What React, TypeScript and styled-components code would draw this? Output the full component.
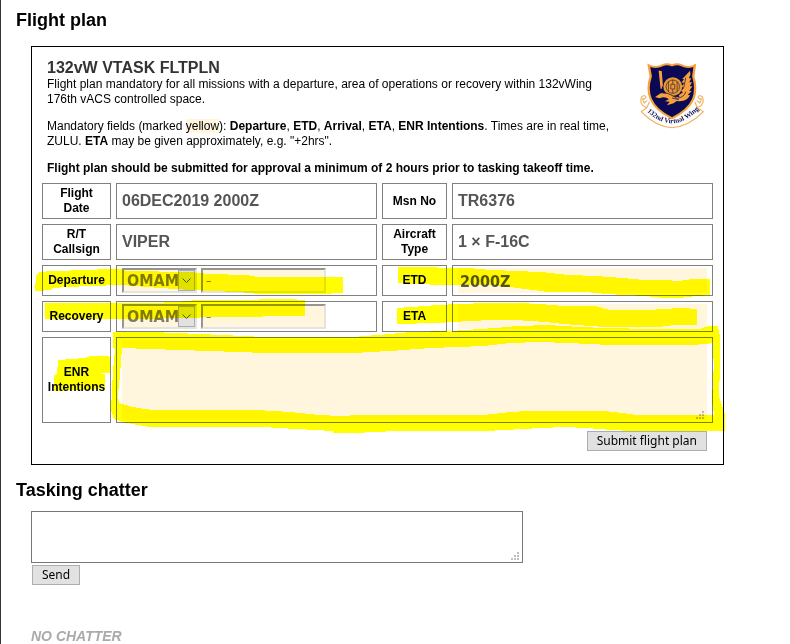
import React from "react";
import styled, { createGlobalStyle, css } from "styled-components";

const GlobalStyle = createGlobalStyle`
  *, *::before, *::after { box-sizing: border-box; }
  html { background: #fff; }
  body {
    margin: 0;
    color: #000;
    font: 12px/15px "Liberation Sans", Arial, sans-serif;
  }
`;

const uiFont = `"DejaVu Sans Condensed", "Noto Sans", sans-serif`;

const Page = styled.main`
  min-height: 100vh;
  padding: 10px 15px 0;
  border-left: 1px solid #35333f;
`;

const SectionTitle = styled.h2`
  margin: 0;
  font-size: 18px;
  line-height: 20px;
`;

const Panel = styled.form`
  position: relative;
  max-width: 693px;
  margin: 16px 0 15px 15px;
  padding: 12px 10px 13px;
  border: 1px solid #000;
`;

const Intro = styled.header`
  display: flex;
  align-items: flex-start;
  gap: 28px;
  padding: 0 9px 0 5px;
  margin-bottom: 7px;
`;

const IntroText = styled.div`
  flex: 1;
  p { margin: 0 0 12px; }
  p:last-child { margin: 0; }
  mark { background: #fff6dd; color: inherit; }
`;

const PanelTitle = styled.h3`
  margin: 0;
  color: #333;
  font-size: 16px;
  line-height: 18px;
`;

const Crest = styled.svg`
  flex: none;
  width: 64px;
  height: 70px;
  margin-top: 2px;
`;

const Fields = styled.div`
  display: grid;
  grid-template-columns: 69px 1fr 65px 1fr;
  grid-template-rows: 36px 36px 31px 31px 86px;
  gap: 5px;
`;

const cell = css`
  display: flex;
  align-items: center;
  border: 1px solid #808080;
`;

const LabelCell = styled.label`
  ${cell}
  justify-content: center;
  text-align: center;
  font-weight: bold;
`;

const ValueCell = styled.div<{ $wide?: boolean }>`
  ${cell}
  position: relative;
  gap: 4px;
  min-width: 0;
  padding: 2px 5px;
  ${(p) => p.$wide && "grid-column: 2 / -1;"}
`;

const Value = styled.output`
  color: #555;
  font-size: 16px;
  font-weight: bold;
  line-height: 20px;
`;

const inset = css`
  height: 25px;
  border: 2px solid;
  border-color: #959595 #e3e3e3 #e3e3e3 #959595;
  border-radius: 0;
  background: #fff6dd;
  outline: none;
`;

const AirfieldBox = styled.span`
  position: relative;
  flex: none;
  width: 75px;
  height: 25px;
`;

const AirfieldSelect = styled.select`
  ${inset}
  appearance: none;
  width: 100%;
  padding: 0 0 0 3px;
  color: #80796f;
  font: bold 16px/21px ${uiFont};
`;

const SelectArrow = styled.svg`
  position: absolute;
  top: 2px;
  right: 2px;
  width: 17px;
  height: 21px;
  pointer-events: none;
`;

const NoteInput = styled.input`
  ${inset}
  width: 125px;
  padding: 0 3px;
  color: #77726a;
  font: 12px/15px ${uiFont};
`;

const TimeInput = styled.input`
  width: 100%;
  height: 25px;
  padding: 2px 2px 0;
  border: 0;
  background: #fff6dd;
  color: #555;
  font: bold 16px/20px ${uiFont};
  outline: none;
`;

const IntentionsArea = styled.textarea`
  display: block;
  width: 100%;
  height: 80px;
  padding: 2px;
  border: 0;
  background: #fff6dd;
  color: #555;
  font: bold 16px/20px ${uiFont};
  resize: none;
  outline: none;
`;

const Grip = styled.svg<{ $inset: number }>`
  position: absolute;
  right: ${(p) => p.$inset}px;
  bottom: 3px;
  width: 8px;
  height: 8px;
  pointer-events: none;
`;

const Actions = styled.div`
  display: flex;
  justify-content: flex-end;
  margin: 8px 6px 0 0;
`;

const Button = styled.button`
  height: 20px;
  padding: 0 9px;
  border: 1px solid #adadad;
  background: #e1e1e1;
  color: #000;
  font: 12px/18px "Noto Sans", sans-serif;
`;

const Marker = styled.svg`
  position: absolute;
  top: 0;
  left: 0;
  width: 691px;
  height: 417px;
  overflow: visible;
  fill: #ff0;
  mix-blend-mode: multiply;
  pointer-events: none;
`;

const Chatter = styled.form`
  margin: 11px 0 43px 15px;
`;

const MessageBox = styled.div`
  position: relative;
  max-width: 492px;
  margin-bottom: 2px;
`;

const MessageArea = styled.textarea`
  display: block;
  width: 100%;
  height: 52px;
  padding: 2px;
  border: 1px solid #767676;
  background: #fff;
  font: 13px/16px ${uiFont};
  resize: none;
  outline: none;
`;

const SendRow = styled.div`
  padding-left: 1px;
`;

const Empty = styled.p`
  margin: 0 0 0 15px;
  color: #aaa;
  font-size: 14px;
  font-style: italic;
  font-weight: bold;
  line-height: 16px;
`;

const GripDots = ({ inset: offset }: { inset: number }) => (
  <Grip $inset={offset} viewBox="0 0 8 8" fill="#000" fillOpacity="0.25" aria-hidden="true">
    <path d="M6 0h2v2h-2zM3 3h2v2h-2zM6 3h2v2h-2zM0 6h2v2h-2zM3 6h2v2h-2zM6 6h2v2h-2z" />
  </Grip>
);

const WingCrest = () => (
  <Crest viewBox="24 18 192 210" role="img" aria-label="132nd Virtual Wing">
    <g transform="translate(-21.600 0) scale(1.180 1)">
      <path d="M61 31Q78 41 95 31Q107 25 120 31Q133 25 145 31Q162 41 178 31L174 64Q184 103 174 132Q162 165 120 190Q78 165 66 132Q55 103 66 64Z" fill="#0b0854" stroke="#f6a13c" strokeWidth="6" />
      <path d="M88 47L93 101M92 48L95 94" fill="none" stroke="#f6a13c" strokeWidth="4" />
      <ellipse cx="122" cy="95" rx="24" ry="28" fill="#e69835" />
      <g fill="none" stroke="#462a36" strokeWidth="2">
        <ellipse cx="122" cy="95" rx="17" ry="20" />
        <path d="M111 79v32M122 74v13M122 102v13M133 79v32M117 88v14h10V88z" />
      </g>
      <path d="M166 47L146 72L151 73L144 82L151 84L144 95L151 98L143 108L148 112L137 121L139 126L126 125Q109 113 91 115L77 126L88 130Q103 123 112 133L102 139L114 140L107 151L124 145L132 138Q156 143 166 121L160 120L170 108L164 107L172 94L165 94L171 82L164 82L169 70L163 70L167 58Z" fill="#f6a13c" />
      <path d="M101 112Q119 119 133 130Q151 127 155 110M155 68L150 97M120 129L137 134" fill="none" stroke="#161050" strokeWidth="2" />
    </g>
    <g transform="translate(-13.200 0) scale(1.110 1)">
      <path d="M52 153Q87 194 120 194Q153 194 188 153L205 170Q165 216 120 218Q75 216 37 170Z" fill="#fff" />
      <g fill="none" stroke="#f2ac58" strokeWidth="3">
        <path d="M59 141L52 158L37 170Q75 215 120 218Q165 215 205 170L188 158L182 141" />
        <path d="M52 158Q34 151 36 135Q36 121 46 122Q54 127 44 132Q37 127 45 144L53 137M188 158Q206 151 204 135Q204 121 194 122Q186 127 196 132Q203 127 195 144L187 137" />
      </g>
    </g>
    <path id="crest-motto" d="M42 166Q120 246 204 160" fill="none" />
    <text fill="#171452" fontFamily="Liberation Serif, serif" fontWeight="bold" fontSize="21">
      <textPath href="#crest-motto" startOffset="50%" textAnchor="middle">132nd Virtual Wing</textPath>
    </text>
  </Crest>
);

const Airfield = ({ id, note }: { id: string; note: string }) => (
  <ValueCell>
    <AirfieldBox>
      <AirfieldSelect id={id} defaultValue="OMAM">
        <option>OMAM</option>
      </AirfieldSelect>
      <SelectArrow viewBox="0 0 17 21" aria-hidden="true">
        <rect x=".5" y=".5" width="16" height="20" fill="#e1e1e1" stroke="#adadad" />
        <path d="M4.500 8.500l4 4 4-4" fill="none" stroke="#555" />
      </SelectArrow>
    </AirfieldBox>
    <NoteInput aria-label={note} defaultValue="–" />
  </ValueCell>
);

const Highlights = () => (
  <Marker aria-hidden="true">
    <g transform="translate(-32 -47)" shapeRendering="crispEdges">
      <path d="M35 291L36 275L40 272L52 271L88 270L105 269L120 269L127 271L190 272L208 274L247 275L257 277L343 277V293H332V294H254V293L215 291L190 290L160 288L122 285L90 286L68 287L52 288V290Z" />
      <path d="M45 303H150L177 302L197 300H259V299H297V300H305V316H263V317H200V318L122 319H45Z" />
      <path d="M398 267H437L438 268H473L474 269L495 270L515 271L541 272L569 275L597 276L622 278L645 280H665L678 281L693 279H710V295L696 296L680 298H663L646 296L606 294L586 292H548L510 287L490 285H440L398 283Z" />
      <path d="M397 308L411 307L438 305L457 304L488 303H520L540 304L564 306H595L610 310H656V309H672V308H690V309H697V325H675L659 327H605L563 324L545 322L515 320H490L452 322L437 323L397 324Z" />
      <path d="M58 360L85 358L90 356H107L110 357V373H101V374H105V389L80 390L54 391V375L57 374Z" />
      <path fillRule="evenodd" d="M113 332H152L200 334L265 337H353L390 334L410 332L450 331L495 328L518 326L548 325L580 327L605 328L653 329H700L708 326H718L720 336V365L719 397L723 408L725 414V431H632L612 430L586 428L565 427L541 428L505 430L485 431H396L355 433H333V431L315 430L262 427H150L132 424L122 422L114 419L111 410L112 390L113 370L115 350L113 348ZM122 348L150 349L210 351L266 353H355L370 352L390 351L431 348L484 346L510 343L540 342L568 343L610 345H690L708 344L713 342V355L714 362L713 380L712 400L714 415H636L622 413L604 411H527L510 412L484 415H360L340 416L320 415L290 412L257 410H152L133 407L119 403L118 395L120 375Z" />
    </g>
  </Marker>
);

export default function App() {
  return (
    <>
      <GlobalStyle />
      <Page>
        <SectionTitle>Flight plan</SectionTitle>
        <Panel onSubmit={(e) => e.preventDefault()}>
          <Intro>
            <IntroText>
              <PanelTitle>132vW VTASK FLTPLN</PanelTitle>
              <p>
                Flight plan mandatory for all missions with a departure, area of operations or
                recovery within 132vWing 176th vACS controlled space.
              </p>
              <p>
                Mandatory fields (marked <mark>yellow</mark>): <b>Departure</b>, <b>ETD</b>,{" "}
                <b>Arrival</b>, <b>ETA</b>, <b>ENR Intentions</b>. Times are in real time, ZULU.{" "}
                <b>ETA</b> may be given approximately, e.g. "+2hrs".
              </p>
              <p>
                <b>
                  Flight plan should be submitted for approval a minimum of 2 hours prior to
                  tasking takeoff time.
                </b>
              </p>
            </IntroText>
            <WingCrest />
          </Intro>

          <Fields>
            <LabelCell htmlFor="date">Flight<br />Date</LabelCell>
            <ValueCell><Value id="date">06DEC2019 2000Z</Value></ValueCell>
            <LabelCell htmlFor="mission">Msn No</LabelCell>
            <ValueCell><Value id="mission">TR6376</Value></ValueCell>

            <LabelCell htmlFor="callsign">R/T<br />Callsign</LabelCell>
            <ValueCell><Value id="callsign">VIPER</Value></ValueCell>
            <LabelCell htmlFor="aircraft">Aircraft<br />Type</LabelCell>
            <ValueCell><Value id="aircraft">1 × F-16C</Value></ValueCell>

            <LabelCell htmlFor="departure">Departure</LabelCell>
            <Airfield id="departure" note="Departure note" />
            <LabelCell htmlFor="etd">ETD</LabelCell>
            <ValueCell><TimeInput id="etd" defaultValue="2000Z" /></ValueCell>

            <LabelCell htmlFor="recovery">Recovery</LabelCell>
            <Airfield id="recovery" note="Recovery note" />
            <LabelCell htmlFor="eta">ETA</LabelCell>
            <ValueCell><TimeInput id="eta" /></ValueCell>

            <LabelCell htmlFor="intentions">ENR<br />Intentions</LabelCell>
            <ValueCell $wide>
              <IntentionsArea id="intentions" />
              <GripDots inset={8} />
            </ValueCell>
          </Fields>

          <Actions>
            <Button type="submit">Submit flight plan</Button>
          </Actions>
          <Highlights />
        </Panel>

        <SectionTitle id="chatter">Tasking chatter</SectionTitle>
        <Chatter onSubmit={(e) => e.preventDefault()}>
          <MessageBox>
            <MessageArea aria-labelledby="chatter" />
            <GripDots inset={4} />
          </MessageBox>
          <SendRow>
            <Button type="submit">Send</Button>
          </SendRow>
        </Chatter>
        <Empty>NO CHATTER</Empty>
      </Page>
    </>
  );
}
